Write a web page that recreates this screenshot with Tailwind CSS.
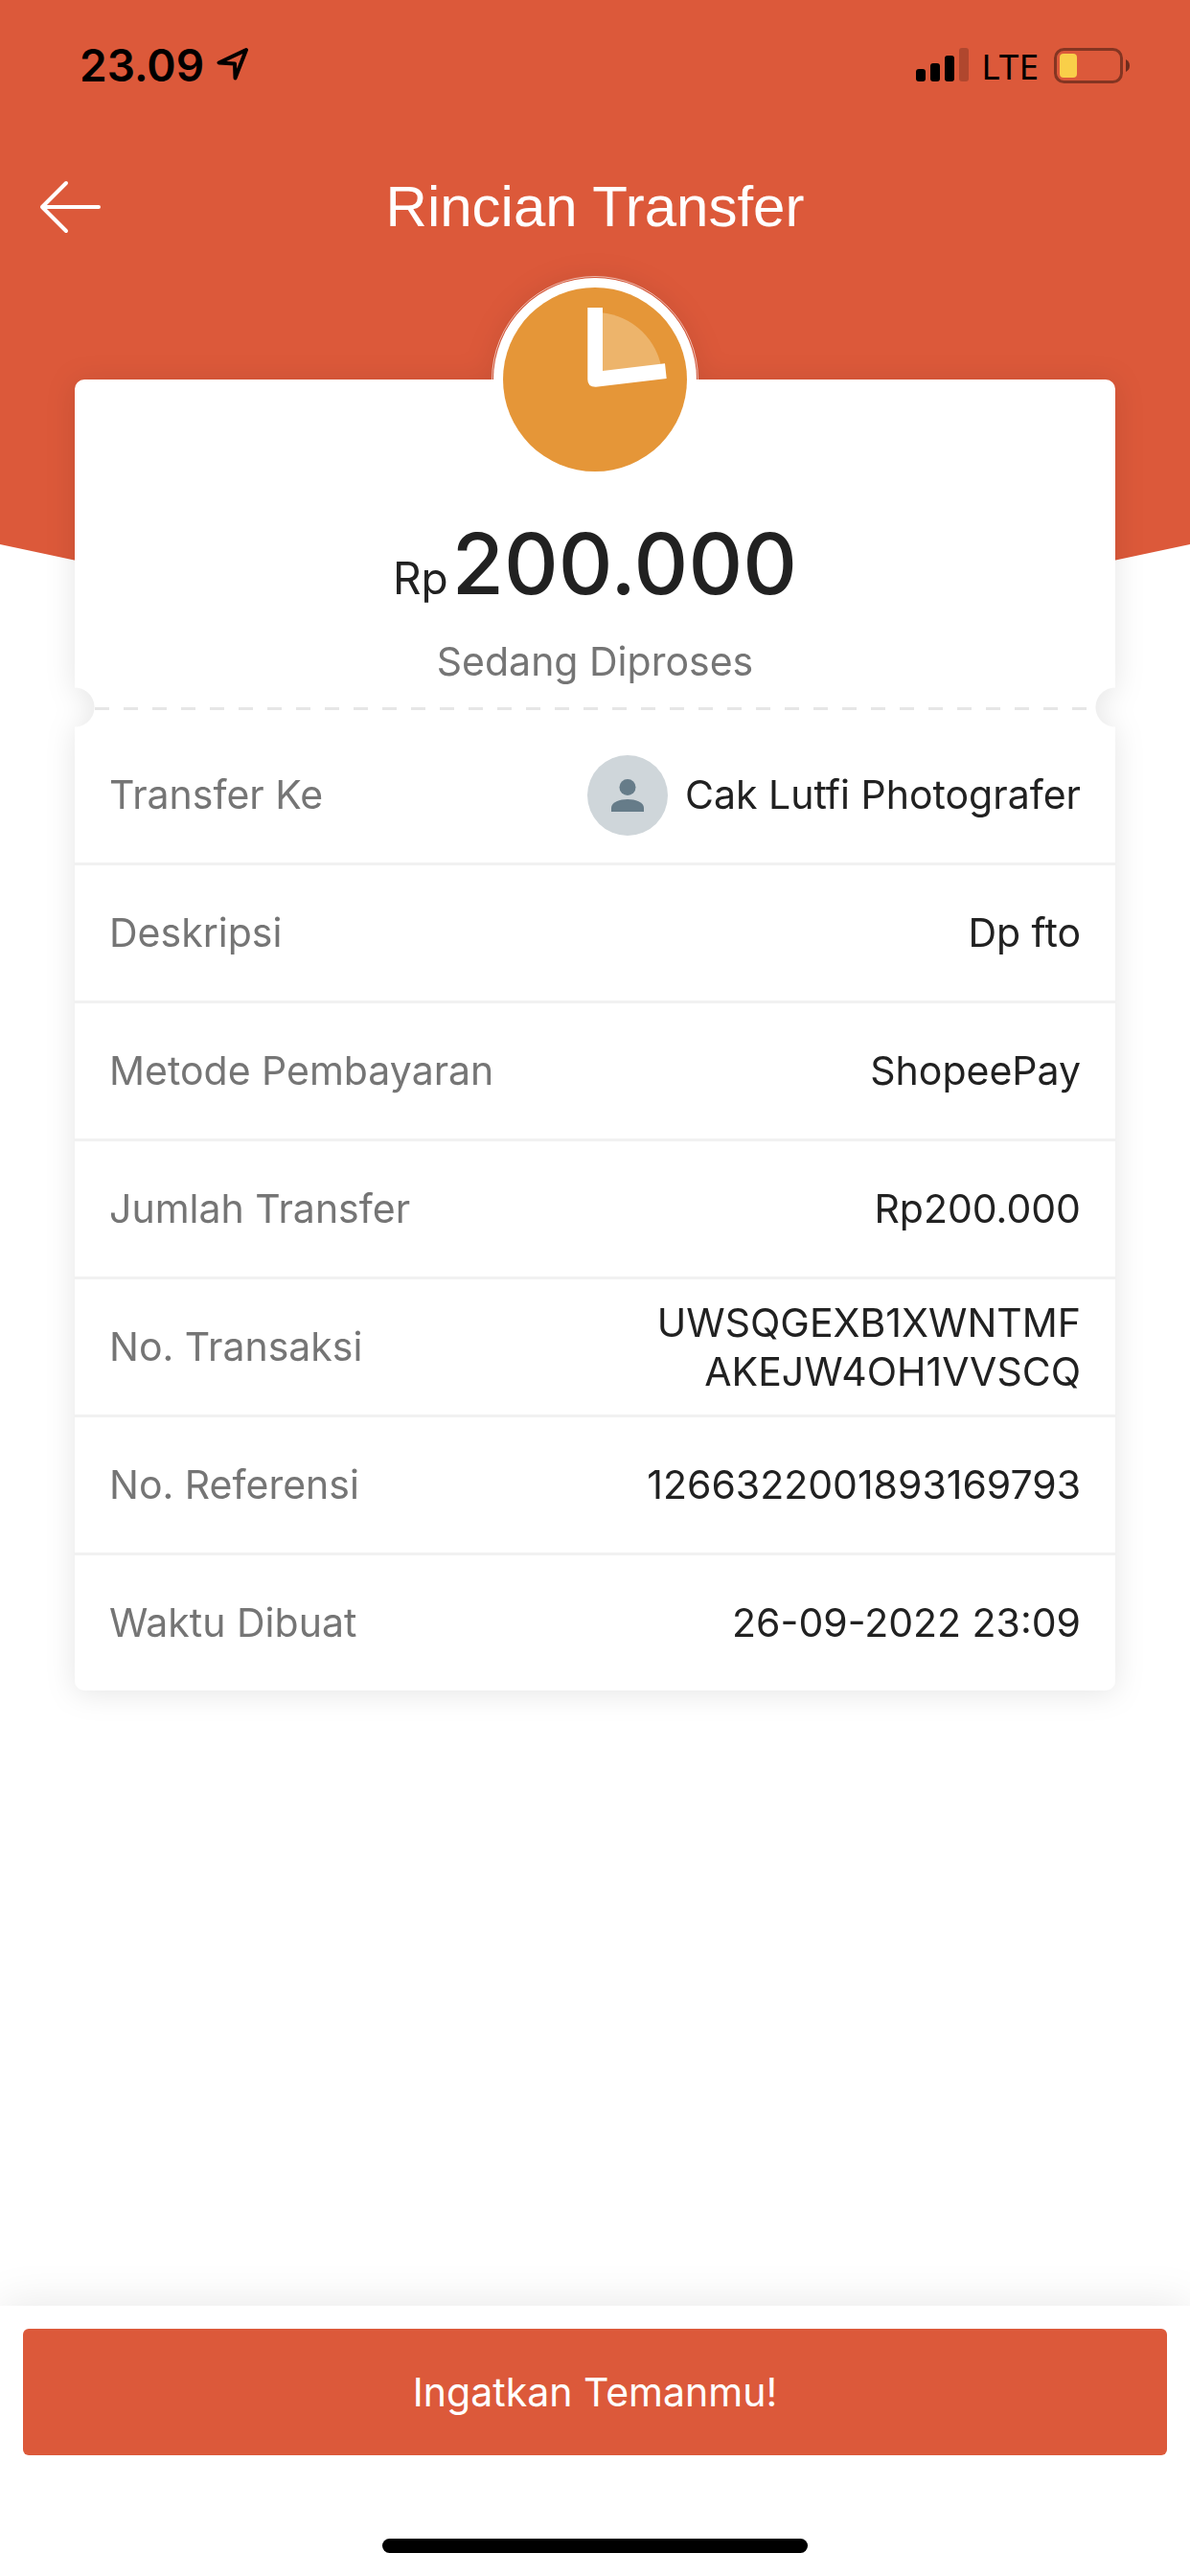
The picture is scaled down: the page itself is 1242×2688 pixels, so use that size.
<!DOCTYPE html>
<html lang="id">
<head>
<meta charset="utf-8">
<meta name="viewport" content="width=device-width, initial-scale=1">
<title>Rincian Transfer</title>
<script src="https://cdn.jsdelivr.net/npm/@tailwindcss/browser@4"></script>
</head>
<body class="relative flex min-h-screen flex-col bg-white font-[Inter,'Noto_Sans',sans-serif] text-[41px] leading-[51px] text-[#212121]">
  <!-- Header backdrop with a pointed lower edge -->
  <div class="absolute inset-x-0 top-0 h-[700px] bg-[#dc593a] [clip-path:polygon(0_0,100%_0,100%_568px,50%_100%,0_568px)]"></div>

  <header class="relative">
    <div class="flex h-[136px] items-center justify-between pr-[62px] pl-[83px] text-black">
      <div class="flex items-center gap-3">
        <span class="text-[46px] font-semibold">23.09</span>
        <svg class="mb-1 size-9" viewBox="0 0 36 36" fill="none" stroke="currentColor" stroke-width="4" stroke-linejoin="round" aria-hidden="true"><path d="M32 4 3.500 17.500 20 18.500 20.500 33.500Z"/></svg>
      </div>
      <div class="flex items-center">
        <svg class="h-9 w-14" viewBox="0 0 56 36" aria-hidden="true"><rect y="22" width="10" height="13" rx="3"/><rect x="15" y="16" width="10" height="19" rx="3"/><rect x="30" y="8" width="10" height="27" rx="3"/><rect x="45" width="10" height="35" rx="3" fill-opacity=".2"/></svg>
        <span class="mr-4 ml-3 font-['Noto_Sans',sans-serif] text-[37px]">LTE</span>
        <svg class="h-[38px] w-20" viewBox="0 0 80 38" aria-hidden="true"><rect x="1.500" y="2.500" width="69" height="34" rx="9" fill="none" stroke="#000" stroke-opacity=".4" stroke-width="3"/><rect x="6" y="7" width="18" height="25" rx="4" fill="#f9cf49"/><path d="M75 13q4 2 4 6.500t-4 6.500Z" fill-opacity=".5"/></svg>
      </div>
    </div>
    <div class="grid h-40 grid-cols-[120px_1fr_120px] items-center">
      <button type="button" aria-label="Kembali" class="flex h-24 items-center pl-10">
        <svg class="h-14 w-[66px]" viewBox="0 0 66 56" fill="none" stroke="#fff" stroke-width="4" stroke-linecap="round" stroke-linejoin="round" aria-hidden="true"><path d="M29 3 4 28l25 25M4 28h59"/></svg>
      </button>
      <h1 class="text-center font-['Liberation_Sans',Arial,sans-serif] text-[60px] leading-[72px] text-white">Rincian Transfer</h1>
    </div>
  </header>

  <main class="relative mt-[100px] flex-1 px-[78px] pb-16">
    <article class="relative drop-shadow-[0_3px_15px_rgba(0,0,0,0.1)]">
      <section class="flex h-[321px] flex-col items-center gap-2 rounded-t-[10px] bg-white pt-[138px]">
        <p class="flex items-baseline gap-1 leading-[108px]"><span class="text-[46px]">Rp</span><span class="text-[88px] font-medium">200.000</span></p>
        <p class="text-[#757575]">Sedang Diproses</p>
      </section>

      <svg class="absolute top-0 left-1/2 size-[216px] -translate-1/2" viewBox="-108 -108 216 216" role="img" aria-label="Sedang diproses">
        <path d="M-107.500 0a107.500 107.500 0 0 1 215 0" fill="none" stroke="#fff" stroke-opacity=".6"/>
        <circle r="106" fill="#fff"/>
        <circle r="96" fill="#e59638"/>
        <path d="M0 0V-70A70 70 0 0 1 69-14Z" fill="#edb46b"/>
        <path d="M-7.700-75H8V-9L73-16.700 74.700-1 1 7.800Q-7.700 8-7.700 0Z" fill="#fff"/>
      </svg>

      <!-- Ticket perforation: half-round notches and dashed line -->
      <div class="flex h-[42px]" aria-hidden="true">
        <div class="w-[21px] bg-[radial-gradient(circle_at_0_50%,transparent_20px,white_21px)]"></div>
        <div class="flex-1 bg-white pt-[21px]">
          <div class="h-[3px] bg-[repeating-linear-gradient(90deg,#e6e6e6_0_15px,white_15px_30px)]"></div>
        </div>
        <div class="w-[21px] bg-[radial-gradient(circle_at_100%_50%,transparent_20px,white_21px)]"></div>
      </div>

      <dl class="divide-y-[3px] divide-[#f1f1f1] rounded-b-[10px] bg-white">
        <div class="flex h-36 items-center justify-between px-9"><dt class="text-[#757575]">Transfer Ke</dt>
          <dd class="flex items-center gap-[18px]">
            <svg class="size-[84px]" viewBox="0 0 84 84" aria-hidden="true"><circle cx="42" cy="42" r="42" fill="#cfd6da"/><circle cx="42" cy="33.500" r="8.500" fill="#667c89"/><path d="M25 59v-4c0-6 9-9 17-9s17 3 17 9v4Z" fill="#667c89"/></svg>
            Cak Lutfi Photografer
          </dd></div>
        <div class="flex h-36 items-center justify-between px-9"><dt class="text-[#757575]">Deskripsi</dt><dd>Dp fto</dd></div>
        <div class="flex h-36 items-center justify-between px-9"><dt class="text-[#757575]">Metode Pembayaran</dt><dd>ShopeePay</dd></div>
        <div class="flex h-36 items-center justify-between px-9"><dt class="text-[#757575]">Jumlah Transfer</dt><dd>Rp200.000</dd></div>
        <div class="flex h-36 items-center justify-between px-9"><dt class="text-[#757575]">No. Transaksi</dt><dd class="text-right">UWSQGEXB1XWNTMF<br>AKEJW4OH1VVSCQ</dd></div>
        <div class="flex h-36 items-center justify-between px-9"><dt class="text-[#757575]">No. Referensi</dt><dd>1266322001893169793</dd></div>
        <div class="flex h-[141px] items-center justify-between px-9"><dt class="text-[#757575]">Waktu Dibuat</dt><dd>26-09-2022 23:09</dd></div>
      </dl>
    </article>
  </main>

  <footer class="relative bg-white px-6 pt-6 pb-6 shadow-[0_0_45px_rgba(0,0,0,0.1)]">
    <button type="button" class="h-[132px] w-full rounded-md bg-[#dc593a] text-white">Ingatkan Temanmu!</button>
    <div class="mx-auto mt-[87px] h-[15px] w-[444px] rounded-full bg-black"></div>
  </footer>
</body>
</html>
